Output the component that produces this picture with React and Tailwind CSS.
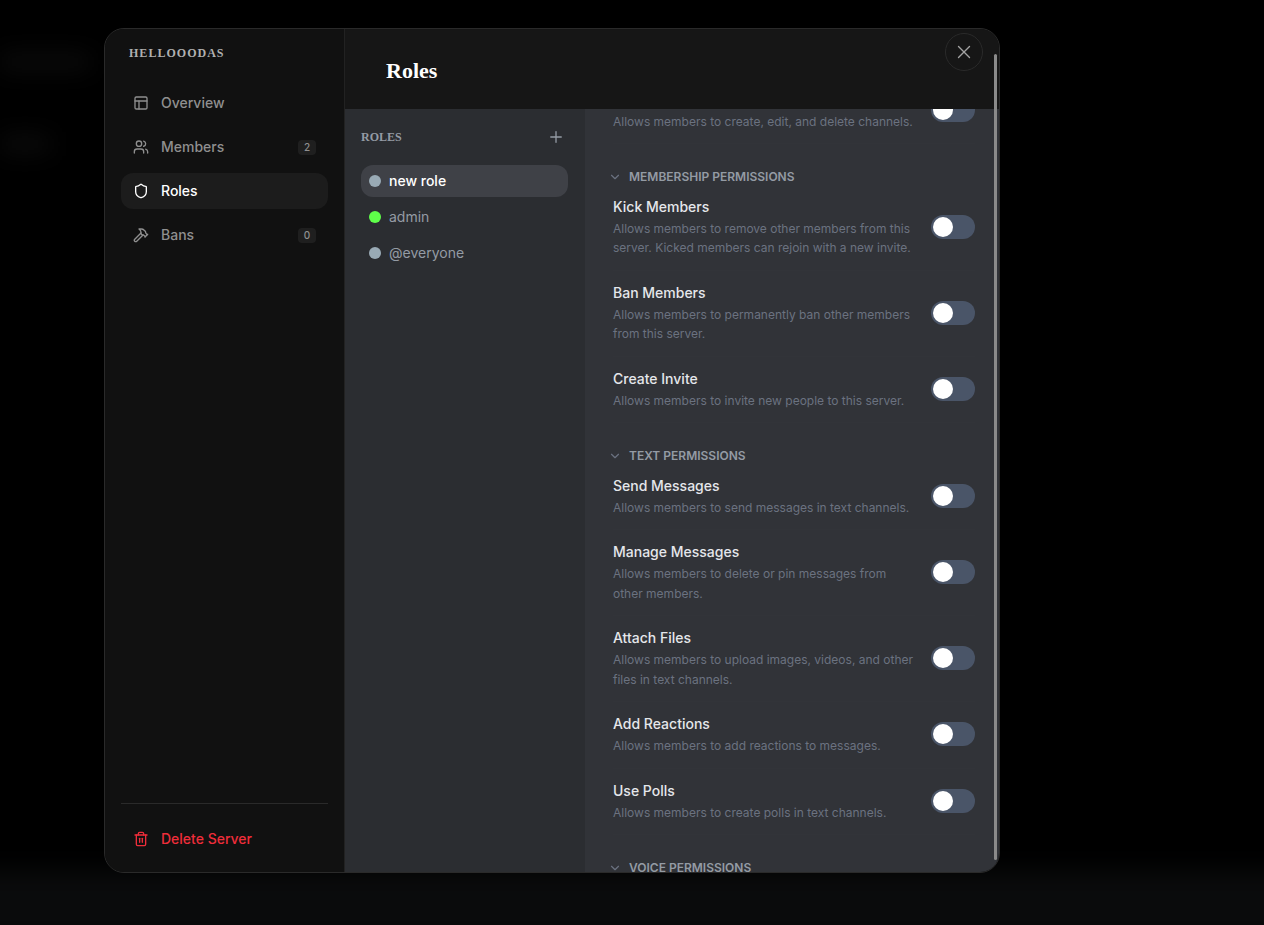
import React from 'react';
import { PanelsTopLeft, Users, Shield, Hammer, Trash2, Plus, X, ChevronDown } from 'lucide-react';

const serif = "font-['Liberation_Serif',serif]";

const navItems = [
  { label: 'Overview', icon: PanelsTopLeft },
  { label: 'Members', icon: Users, badge: 2 },
  { label: 'Roles', icon: Shield, active: true },
  { label: 'Bans', icon: Hammer, badge: 0 },
];

const roles = [
  { name: 'new role', dot: 'bg-[#99aab5]', active: true },
  { name: 'admin', dot: 'bg-[#5fff4a]' },
  { name: '@everyone', dot: 'bg-[#99aab5]' },
];

const sections = [
  {
    rows: [{ title: 'Manage Channels', text: 'Allows members to create, edit, and delete channels.' }],
  },
  {
    name: 'Membership Permissions',
    rows: [
      { title: 'Kick Members', text: 'Allows members to remove other members from this server. Kicked members can rejoin with a new invite.' },
      { title: 'Ban Members', text: 'Allows members to permanently ban other members from this server.' },
      { title: 'Create Invite', text: 'Allows members to invite new people to this server.' },
    ],
  },
  {
    name: 'Text Permissions',
    rows: [
      { title: 'Send Messages', text: 'Allows members to send messages in text channels.' },
      { title: 'Manage Messages', text: 'Allows members to delete or pin messages from other members.' },
      { title: 'Attach Files', text: 'Allows members to upload images, videos, and other files in text channels.' },
      { title: 'Add Reactions', text: 'Allows members to add reactions to messages.' },
      { title: 'Use Polls', text: 'Allows members to create polls in text channels.' },
    ],
  },
  {
    name: 'Voice Permissions',
    rows: [{ title: 'Connect', text: 'Allows members to join voice channels.' }],
  },
];

function Toggle() {
  return (
    <div className="-mt-[0.6px] flex h-6 w-11 shrink-0 items-center rounded-full bg-[#4a5568] px-0.5">
      <div className="size-5 rounded-full bg-white" />
    </div>
  );
}

function PermissionRow({ title, text }) {
  return (
    <div className="ml-1 flex items-center gap-4 border-b border-[#323439] py-3">
      <div className="min-w-0 flex-1">
        <div className="text-sm leading-5 font-medium text-[#e5e7eb]">{title}</div>
        <p className="mt-0.5 text-xs leading-[19.5px] text-[#6b7280]">{text}</p>
      </div>
      <Toggle />
    </div>
  );
}

export default function App() {
  return (
    <div className="relative h-[925px] w-full overflow-hidden bg-black pt-7 pl-[104px] font-['Inter',sans-serif]">
      {/* blurred page behind the modal */}
      <div className="absolute -inset-x-10 -bottom-4 h-[70px] bg-[#0a0b0c] blur-md" />
      <div className="absolute top-[56px] left-0 h-3 w-[90px] bg-[#111111] blur-md" />
      <div className="absolute top-[138px] left-0 h-3 w-[50px] bg-[#111111] blur-md" />

      <div className="relative flex h-[845px] w-[896px] overflow-hidden rounded-[20px] border border-[#2a2a2a] bg-[#111111]">
        {/* Sidebar */}
        <aside className="flex w-[240px] shrink-0 flex-col border-r border-[#222222] bg-[#111111] px-4 pt-4 pb-[15px]">
          <h1 className={`${serif} px-2 text-xs leading-4 font-bold tracking-[0.085em] text-[#b0b0b0] uppercase`}>Hellooodas</h1>
          <nav className="mt-6 flex flex-col gap-2">
            {navItems.map(({ label, icon: Icon, badge, active }) => (
              <div key={label} className={`flex h-9 items-center gap-3 rounded-xl px-3 text-sm font-medium ${active ? 'bg-[#1c1c1c] text-white' : 'text-[#8f8f8f]'}`}>
                <Icon size={16} />
                <span className="flex-1">{label}</span>
                {badge !== undefined && (
                  <span className="flex h-[15px] w-[18px] items-center justify-center rounded bg-[#1f1f1f] text-[10px] text-[#8f8f8f]">{badge}</span>
                )}
              </div>
            ))}
          </nav>
          <div className="mt-auto border-t border-[#2a2a2a] pt-[17px]">
            <div className="flex h-9 items-center gap-3 px-3 text-sm font-medium text-[#ef2d3a]">
              <Trash2 size={16} />
              Delete Server
            </div>
          </div>
        </aside>

        {/* Main */}
        <div className="flex min-w-0 flex-1 flex-col">
          <header className="flex h-20 shrink-0 items-center bg-[#161616] pt-0.5 pl-[41px]">
            <h2 className={`${serif} text-[22px] font-bold text-white`}>Roles</h2>
          </header>
          <div className="flex min-h-0 flex-1">
            <div className="w-[240px] shrink-0 bg-[#2b2d31] py-4 pr-[17px] pl-4">
              <div className="flex h-6 items-center justify-between pr-[3px]">
                <span className={`${serif} text-xs font-bold text-[#949ba4] uppercase`}>Roles</span>
                <Plus size={18} strokeWidth={1.75} className="text-[#949ba4]" />
              </div>
              <div className="mt-4 flex flex-col gap-1">
                {roles.map((r) => (
                  <div key={r.name} className={`flex h-8 items-center gap-2 rounded-xl px-2 text-sm ${r.active ? 'bg-[#3f4147] font-medium text-white' : 'text-[#949ba4]'}`}>
                    <span className={`size-3 rounded-full ${r.dot}`} />
                    {r.name}
                  </div>
                ))}
              </div>
            </div>
            <div className="min-w-0 flex-1 overflow-hidden bg-[#313338] px-6">
              <div className="-mt-[31.5px]">
                {sections.map((s) => (
                  <section key={s.name || 'general'} className={s.name ? 'mt-[24.5px]' : ''}>
                    {s.name && (
                      <div className="-ml-px flex h-4 items-center gap-[7px] text-xs font-semibold text-[#949ba4] uppercase">
                        <ChevronDown size={14} className="text-[#6b7280]" />
                        {s.name}
                      </div>
                    )}
                    {s.rows.map((row) => (
                      <PermissionRow key={row.title} {...row} />
                    ))}
                  </section>
                ))}
              </div>
            </div>
          </div>
        </div>

        {/* Close button and scrollbar sit over the panels */}
        <button className="absolute top-[4px] right-[16px] flex size-[38px] items-center justify-center rounded-full border border-[#2a2a2a] text-[#a3a3a3]">
          <X size={22} strokeWidth={1.5} />
        </button>
        <div className="absolute top-[25px] right-[2px] h-[806px] w-[3px] rounded-full bg-[#8a8a8a]" />
      </div>
    </div>
  );
}
